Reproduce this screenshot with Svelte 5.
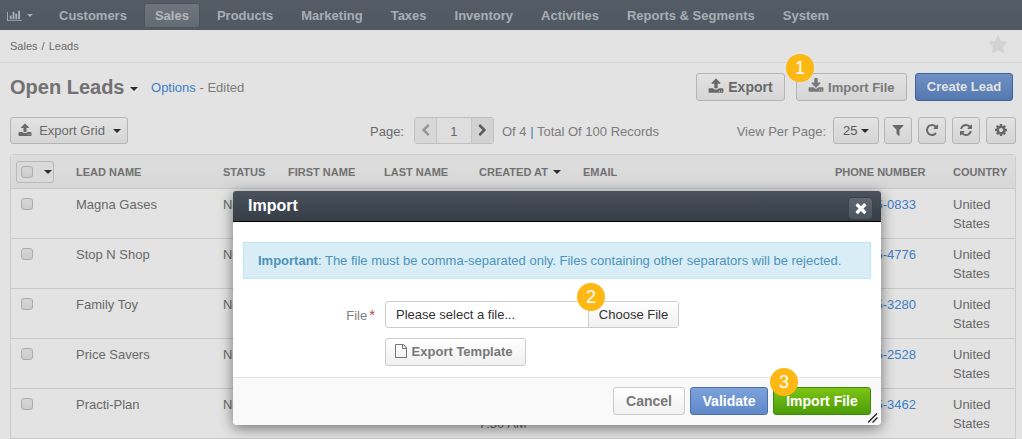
<script>
    // FontAwesome-style glyphs as [viewBoxWidth, path]
    const icons = {
        chart: [2048, 'M640 896v512h-256v-512h256zm384-512v1024h-256v-1024h256zm1024 1152v128h-2048v-1280h128v1152h1920zm-640-896v768h-256v-768h256zm384-384v1152h-256v-1152h256z'],
        star: [1792, 'M1728 647q0 22-26 48l-363 354 86 500q1 7 1 20 0 21-10.5 35.5t-30.5 14.5q-19 0-40-12l-449-236-449 236q-22 12-40 12-21 0-31.5-14.5t-10.5-35.5q0-6 2-20l86-500-364-354q-25-27-25-48 0-37 56-46l502-73 225-455q19-41 49-41t49 41l225 455 502 73q56 9 56 46z'],
        upload: [1792, 'M1344 1472q0-26-19-45t-45-19-45 19-19 45 19 45 45 19 45-19 19-45zm256 0q0-26-19-45t-45-19-45 19-19 45 19 45 45 19 45-19 19-45zm128-224v320q0 40-28 68t-68 28h-1472q-40 0-68-28t-28-68v-320q0-40 28-68t68-28h427q21 56 70.5 92t110.5 36h256q61 0 110.5-36t70.5-92h427q40 0 68 28t28 68zm-325-648q-17 40-59 40h-256v448q0 26-19 45t-45 19h-256q-26 0-45-19t-19-45v-448h-256q-42 0-59-40-17-39 14-69l448-448q18-19 45-19t45 19l448 448q31 30 14 69z'],
        download: [1792, 'M1344 1344q0-26-19-45t-45-19-45 19-19 45 19 45 45 19 45-19 19-45zm256 0q0-26-19-45t-45-19-45 19-19 45 19 45 45 19 45-19 19-45zm128-224v320q0 40-28 68t-68 28h-1472q-40 0-68-28t-28-68v-320q0-40 28-68t68-28h465l135 136q58 56 136 56t136-56l136-136h464q40 0 68 28t28 68zm-325-569q17 41-14 70l-448 448q-18 19-45 19t-45-19l-448-448q-31-29-14-70 17-39 59-39h256v-448q0-26 19-45t45-19h256q26 0 45 19t19 45v448h256q42 0 59 39z'],
        filter: [1792, 'M1595 295q17 41-14 70l-493 493v742q0 42-39 59-13 5-25 5-27 0-45-19l-256-256q-19-19-19-45v-486l-493-493q-31-29-14-70 17-39 59-39h1280q42 0 59 39z'],
        repeat: [1792, 'M1664 256v448q0 26-19 45t-45 19h-448q-42 0-59-40-17-39 14-69l138-138q-148-137-349-137-104 0-198.5 40.5t-163.5 109.5-109.5 163.5-40.5 198.5 40.5 198.5 109.5 163.5 163.5 109.5 198.5 40.5q119 0 225-52t179-147q7-10 23-12 15 0 25 9l137 138q9 8 9.5 20.5t-7.5 22.5q-109 132-264 204.5t-327 72.5q-156 0-298-61t-245-164-164-245-61-298 61-298 164-245 245-164 298-61q147 0 284.5 55.5t244.5 156.5l130-129q29-31 70-14 39 17 39 59z'],
        refresh: [1792, 'M1639 1056q0 5-1 7-64 268-268 434.5t-478 166.5q-146 0-282.5-55t-243.5-157l-129 129q-19 19-45 19t-45-19-19-45v-448q0-26 19-45t45-19h448q26 0 45 19t19 45-19 45l-137 137q71 66 161 102t187 36q134 0 250-65t186-179q11-17 53-117 8-23 30-23h192q13 0 22.5 9.5t9.5 22.5zm25-800v448q0 26-19 45t-45 19h-448q-26 0-45-19t-19-45 19-45l138-138q-148-137-349-137-134 0-250 65t-186 179q-11 17-53 117-8 23-30 23h-199q-13 0-22.5-9.5t-9.5-22.5v-7q65-268 270-434.5t480-166.5q146 0 284 55.5t245 156.5l130-129q19-19 45-19t45 19 19 45z'],
        cog: [1792, 'M1152 896q0-106-75-181t-181-75-181 75-75 181 75 181 181 75 181-75 75-181zm512-109v222q0 12-8 23t-20 13l-185 28q-19 54-39 91 35 50 107 138 10 12 10 25t-9 23q-27 37-99 108t-94 71q-12 0-26-9l-138-108q-44 23-91 38-16 136-29 186-7 28-36 28h-222q-14 0-24.5-8.5t-11.5-21.5l-28-184q-49-16-90-37l-141 107q-10 9-25 9-14 0-25-11-126-114-165-168-7-10-7-23 0-12 8-23 15-21 51-66.5t54-70.5q-27-50-41-99l-183-27q-13-2-21-12.5t-8-23.5v-222q0-12 8-23t19-13l186-28q14-46 39-92-40-57-107-138-10-12-10-24 0-10 9-23 26-36 98.5-107.5t94.5-71.5q13 0 26 10l138 107q44-23 91-38 16-136 29-186 7-28 36-28h222q14 0 24.5 8.5t11.5 21.5l28 184q49 16 90 37l142-107q9-9 24-9 13 0 25 10 129 119 165 170 7 8 7 22 0 12-8 23-15 21-51 66.5t-54 70.5q26 50 41 98l183 28q13 2 21 12.5t8 23.5z'],
        times: [1792, 'M1490 1322q0 40-28 68l-136 136q-28 28-68 28t-68-28l-294-294-294 294q-28 28-68 28t-68-28l-136-136q-28-28-28-68t28-68l294-294-294-294q-28-28-28-68t28-68l136-136q28-28 68-28t68 28l294 294 294-294q28-28 68-28t68 28l136 136q28 28 28 68t-28 68l-294 294 294 294q28 28 28 68z'],
        file: [1792, 'M1596 380q28 28 48 76t20 88v1152q0 40-28 68t-68 28h-1344q-40 0-68-28t-28-68v-1600q0-40 28-68t68-28h896q40 0 88 20t76 48zm-444-244v376h376q-10-29-22-41l-313-313q-12-12-41-22zm384 1528v-1024h-416q-40 0-68-28t-28-68v-416h-768v1536h1280z'],
        left: [1792, 'M1427 301l-531 531 531 531q19 19 19 45t-19 45l-166 166q-19 19-45 19t-45-19l-742-742q-19-19-19-45t19-45l742-742q19-19 45-19t45 19l166 166q19 19 19 45t-19 45z'],
        right: [1792, 'M1363 877l-742 742q-19 19-45 19t-45-19l-166-166q-19-19-19-45t19-45l531-531-531-531q-19-19-19-45t19-45l166-166q19-19 45-19t45 19l742 742q19 19 19 45t-19 45z']
    };

    const navItems = ['Customers', 'Sales', 'Products', 'Marketing', 'Taxes', 'Inventory', 'Activities', 'Reports & Segments', 'System'];

    const leads = [
        { name: 'Magna Gases', phone: '800-555-0833' },
        { name: 'Stop N Shop', phone: '800-555-4776' },
        { name: 'Family Toy', phone: '800-555-3280' },
        { name: 'Price Savers', phone: '800-555-2528' },
        { name: 'Practi-Plan', phone: '800-555-3462' }
    ];
</script>

{#snippet icon(name, size)}
    <svg class="icon" width={size * icons[name][0] / 1792} height={size} viewBox="0 0 {icons[name][0]} 1792" fill="currentColor" aria-hidden="true">
        <path d={icons[name][1]} />
    </svg>
{/snippet}

<div class="page">
    <nav class="topnav">
        <span class="brand">{@render icon('chart', 13)}<i class="caret light"></i></span>
        {#each navItems as item}
            <a class="nav-item" class:active={item === 'Sales'} href="#top">{item}</a>
        {/each}
    </nav>

    <div class="crumbs">
        <span class="trail">Sales / Leads</span>
        <span class="star">{@render icon('star', 20)}</span>
    </div>

    <div class="titlebar">
        <h1>Open Leads <i class="caret"></i></h1>
        <span class="subtitle"><a href="#top">Options</a> - Edited</span>
        <div class="actions">
            <button class="btn bold">{@render icon('upload', 16)} Export</button>
            <button class="btn import">{@render icon('download', 16)} Import File</button>
            <button class="btn primary">Create Lead</button>
        </div>
    </div>

    <div class="toolbar">
        <button class="btn small grid-btn">{@render icon('upload', 14)} <span class="grid-label">Export Grid</span> <i class="caret"></i></button>
        <div class="pager">
            <span>Page:</span>
            <div class="pager-box">
                <span class="pg-arrow">{@render icon('left', 13)}</span>
                <span class="pg-num">1</span>
                <span class="pg-arrow next">{@render icon('right', 13)}</span>
            </div>
            <span class="pg-total">Of 4 <b>|</b> Total Of 100 Records</span>
        </div>
        <div class="view">
            <span class="view-label">View Per Page:</span>
            <button class="btn small per">25 <i class="caret"></i></button>
            <button class="btn small tool">{@render icon('filter', 14)}</button>
            <button class="btn small tool">{@render icon('repeat', 14)}</button>
            <button class="btn small tool">{@render icon('refresh', 14)}</button>
            <button class="btn small tool gear">{@render icon('cog', 14)}</button>
        </div>
    </div>

    <table class="grid">
        <colgroup>
            <col style="width:65px" /><col style="width:147px" /><col style="width:65px" /><col style="width:96px" />
            <col style="width:95px" /><col style="width:104px" /><col style="width:252px" /><col style="width:118px" /><col />
        </colgroup>
        <thead>
            <tr>
                <th class="check-head"><span class="check-menu"><i class="check"></i><i class="caret"></i></span></th>
                <th>Lead Name</th>
                <th>Status</th>
                <th>First Name</th>
                <th>Last Name</th>
                <th>Created At <i class="caret"></i></th>
                <th>Email</th>
                <th>Phone Number</th>
                <th>Country</th>
            </tr>
        </thead>
        <tbody>
            {#each leads as lead}
                <tr>
                    <td><i class="check"></i></td>
                    <td>{lead.name}</td>
                    <td>New</td>
                    <td></td>
                    <td></td>
                    <td>04/14/2016<br />7:30 AM</td>
                    <td></td>
                    <td><a href="#top">{lead.phone}</a></td>
                    <td>United<br />States</td>
                </tr>
            {/each}
        </tbody>
    </table>

    <div class="backdrop"></div>

    <div class="modal">
        <header class="modal-head">
            <h2>Import</h2>
            <button class="close">{@render icon('times', 16)}</button>
        </header>
        <div class="modal-body">
            <div class="alert"><strong>Important</strong>: The file must be comma-separated only. Files containing other separators will be rejected.</div>
            <div class="file-row">
                <span class="file-label">File<em>*</em></span>
                <div class="file-input">
                    <span class="file-text">Please select a file...</span>
                    <span class="file-btn">Choose File</span>
                </div>
            </div>
            <button class="btn template">{@render icon('file', 14)} Export Template</button>
        </div>
        <footer class="modal-foot">
            <button class="btn cancel">Cancel</button>
            <button class="btn primary validate">Validate</button>
            <button class="btn success">Import File</button>
        </footer>
        <svg class="grip" width="10" height="10" viewBox="0 0 10 10" aria-hidden="true">
            <path d="M0 9.5L9 0.5M4.5 9.5L9.5 4.5" stroke="#222" stroke-width="1.4" fill="none" />
        </svg>
    </div>

    <span class="badge one">1</span>
    <span class="badge two">2</span>
    <span class="badge three">3</span>
</div>

<style>
    :global(body) {
        margin: 0;
        overflow: hidden;
    }

    .page {
        position: relative;
        height: 439px;
        overflow: hidden;
        background: #fff;
        color: #777;
        font: 13px/19px "Liberation Sans", Arial, sans-serif;
    }

    a {
        color: #478fe0;
        text-decoration: none;
    }

    .icon {
        display: inline-block;
        vertical-align: -2px;
    }

    .caret {
        display: inline-block;
        width: 0;
        height: 0;
        vertical-align: 2px;
        border-top: 4px solid #333;
        border-left: 4px solid transparent;
        border-right: 4px solid transparent;
    }

    .caret.light {
        border-top: 3px solid #bcc4ca;
        border-left-width: 3.5px;
        border-right-width: 3.5px;
        margin-left: 5px;
    }

    .topnav {
        display: flex;
        align-items: center;
        height: 30px;
        background: linear-gradient(#5f6873, #5a646e);
    }

    .brand {
        display: flex;
        align-items: center;
        width: 41px;
        padding-left: 7px;
        color: #bcc4ca;
    }

    .nav-item {
        margin-right: 6px;
        padding: 0 11px;
        height: 25px;
        line-height: 25px;
        border-radius: 3px;
        color: #bcc4ca;
        font-weight: 700;
    }

    .nav-item.active {
        background: linear-gradient(#7d858d, #6f7881);
        box-shadow: inset 0 0 0 1px #565f68;
        color: #c8cfd4;
    }

    .crumbs {
        display: flex;
        align-items: center;
        justify-content: space-between;
        height: 32px;
        padding: 0 14px 0 10px;
        border-bottom: 1px solid #f0f0f0;
        font-size: 11px;
    }

    .trail {
        word-spacing: 1px;
    }

    .star {
        padding-top: 2px;
        color: #eee;
    }

    .titlebar {
        display: flex;
        align-items: center;
        height: 28px;
        margin-top: 10px;
        padding: 0 9px 0 10px;
    }

    h1 {
        margin: 0 13px 0 0;
        font-size: 20px;
        font-weight: 700;
        color: #808080;
    }

    h1 .caret {
        vertical-align: 3px;
    }

    .subtitle {
        color: #8c8c8c;
    }

    .actions {
        display: flex;
        gap: 11px;
        margin-left: auto;
    }

    .btn {
        height: 28px;
        padding: 0 12px;
        border: 1px solid #ccc;
        border-radius: 3px;
        background: linear-gradient(#fff, #f0f0f0);
        color: #777;
        font: 700 13px "Liberation Sans", Arial, sans-serif;
        white-space: nowrap;
    }

    .btn.bold {
        width: 89px;
        font-size: 14px;
        padding: 0;
    }

    .btn.import {
        width: 111px;
        padding: 0;
        color: #888;
    }

    .btn.primary {
        width: 98px;
        padding: 0;
        margin-left: -3px;
        border-color: #4a6fa8;
        background: linear-gradient(#7da2dc, #5f88c8);
        color: #fff;
    }

    .actions .btn {
        padding-bottom: 2px;
    }

    .toolbar {
        display: flex;
        align-items: center;
        height: 27px;
        margin-top: 16px;
        padding: 0 6px 0 10px;
    }

    .small {
        height: 27px;
    }

    .grid-btn {
        width: 118px;
        padding: 0;
        font-weight: 400;
        font-size: 13px;
    }

    .grid-label {
        margin: 0 4px 0 4px;
    }

    .pager {
        display: flex;
        align-items: center;
        margin-left: 242px;
        padding-top: 1px;
    }

    .pager-box {
        display: flex;
        width: 80px;
        height: 27px;
        box-sizing: border-box;
        margin: -1px 0 0 10px;
        border: 1px solid #d8d8d8;
        border-radius: 3px;
    }

    .pg-arrow {
        display: flex;
        align-items: center;
        justify-content: center;
        width: 21px;
        background: #f3f3f3;
        color: #aaa;
    }

    .pg-arrow.next {
        color: #666;
        background: #ececec;
    }

    .pg-num {
        flex: 1;
        line-height: 27px;
        text-align: center;
        border-left: 1px solid #ddd;
        border-right: 1px solid #ddd;
        background: #fafafa;
    }

    .pg-total {
        margin-left: 8px;
        color: #8c8c8c;
    }

    .pg-total b {
        font-weight: 400;
        color: #478fe0;
    }

    .view {
        display: flex;
        align-items: center;
        gap: 6px;
        margin-left: auto;
        color: #8c8c8c;
    }

    .view-label {
        padding-top: 1px;
    }

    .per {
        width: 46px;
        padding: 0;
        margin: 0 -1px 0 1px;
        font-weight: 400;
        color: #666;
    }

    .tool {
        width: 28px;
        padding: 0;
    }

    .gear {
        width: 30px;
    }

    .grid {
        width: 1006px;
        margin: 10px 0 0 10px;
        border-collapse: separate;
        border-spacing: 0;
        table-layout: fixed;
        border: 1px solid #e6e6e6;
        border-radius: 4px 4px 0 0;
    }

    th {
        height: 31px;
        padding: 2px 0 0 0;
        box-sizing: content-box;
        background: linear-gradient(#f9f9f9, #f2f2f2);
        border-bottom: 1px solid #e2e2e2;
        color: #808080;
        font-size: 11px;
        font-weight: 700;
        text-transform: uppercase;
        text-align: left;
        white-space: nowrap;
    }

    th .caret {
        margin-left: 2px;
    }

    td {
        height: 50px;
        padding: 6px 0 0 0;
        box-sizing: border-box;
        vertical-align: top;
        border-bottom: 1px solid #e2e2e2;
    }

    td:first-child {
        padding-left: 10px;
        padding-top: 9px;
    }

    .check-head {
        padding: 0 0 0 5px;
    }

    .check-menu {
        display: flex;
        align-items: center;
        gap: 9px;
        width: 38px;
        height: 22px;
        padding-left: 4px;
        box-sizing: border-box;
        border: 1px solid #d0d0d0;
        border-radius: 3px;
        background: #f5f5f5;
    }

    .check {
        display: block;
        width: 12px;
        height: 12px;
        box-sizing: border-box;
        border: 1px solid #c2c2c2;
        border-radius: 3px;
        background: linear-gradient(#f0f0f0, #e6e6e6);
    }

    .backdrop {
        position: absolute;
        inset: 0;
        background: rgba(0, 0, 0, 0.11);
    }

    .modal {
        position: absolute;
        left: 233px;
        top: 191px;
        width: 648px;
        height: 234px;
        display: flex;
        flex-direction: column;
        background: #fff;
        border-radius: 4px;
        box-shadow: 0 3px 14px rgba(0, 0, 0, 0.5);
    }

    .modal-head {
        display: flex;
        align-items: center;
        justify-content: space-between;
        height: 30px;
        padding: 0 8px 0 15px;
        background: linear-gradient(#4a525d, #363d46);
        border-bottom: 1px solid #000;
        border-radius: 3px 3px 0 0;
    }

    h2 {
        margin: 0 0 2px;
        color: #fff;
        font-size: 16px;
        font-weight: 700;
    }

    .close {
        width: 25px;
        height: 23px;
        margin-top: 4px;
        padding: 0;
        border: 1px solid #3b424b;
        border-radius: 4px;
        background: linear-gradient(#5f6771, #4c545e);
        color: #fff;
    }

    .modal-body {
        flex: 1;
        padding: 20px 10px 0;
    }

    .alert {
        height: 37px;
        box-sizing: border-box;
        padding-left: 14px;
        line-height: 35px;
        background: #d9edf7;
        border: 1px solid #bce8f1;
        color: #4b93b8;
        white-space: nowrap;
    }

    .file-row {
        display: flex;
        align-items: center;
        margin-top: 22px;
        height: 27px;
    }

    .file-label {
        width: 142px;
        box-sizing: border-box;
        padding-right: 10px;
        text-align: right;
        color: #808080;
    }

    .file-label em {
        margin-left: 2px;
        font-style: normal;
        font-size: 15px;
        color: #b94a48;
    }

    .file-input {
        display: flex;
        width: 294px;
        height: 27px;
        box-sizing: border-box;
        border: 1px solid #ccc;
        border-radius: 3px;
        color: #333;
    }

    .file-text {
        width: 202px;
        padding-left: 10px;
        box-sizing: border-box;
        line-height: 25px;
    }

    .file-btn {
        flex: 1;
        text-align: center;
        line-height: 25px;
        border-left: 1px solid #ccc;
        background: linear-gradient(#fff, #f0f0f0);
    }

    .btn.template {
        display: block;
        width: 141px;
        margin: 10px 0 0 142px;
        padding: 0 0 2px 8px;
        text-align: left;
    }

    .modal-foot {
        display: flex;
        justify-content: flex-end;
        gap: 5px;
        height: 48px;
        box-sizing: border-box;
        padding: 9px 10px 0 0;
        background: #f9f9f9;
        border-top: 1px solid #e5e5e5;
        border-radius: 0 0 4px 4px;
    }

    .modal-foot .btn {
        font-size: 14px;
    }

    .btn.cancel {
        width: 72px;
        padding: 0;
    }

    .btn.validate {
        width: 78px;
        margin: 0;
    }

    .btn.success {
        width: 98px;
        padding: 0;
        border-color: #3f8a0c;
        background: linear-gradient(#7cc414, #4c9c08);
        color: #fff;
    }

    .grip {
        position: absolute;
        right: 3px;
        bottom: 2px;
    }

    .badge {
        position: absolute;
        width: 28px;
        height: 28px;
        border-radius: 50%;
        background: #fdb813;
        color: #fff;
        font-size: 18px;
        line-height: 28px;
        text-align: center;
    }

    .one {
        left: 786px;
        top: 54px;
    }

    .two {
        left: 577px;
        top: 283px;
    }

    .three {
        left: 770px;
        top: 368px;
    }
</style>
